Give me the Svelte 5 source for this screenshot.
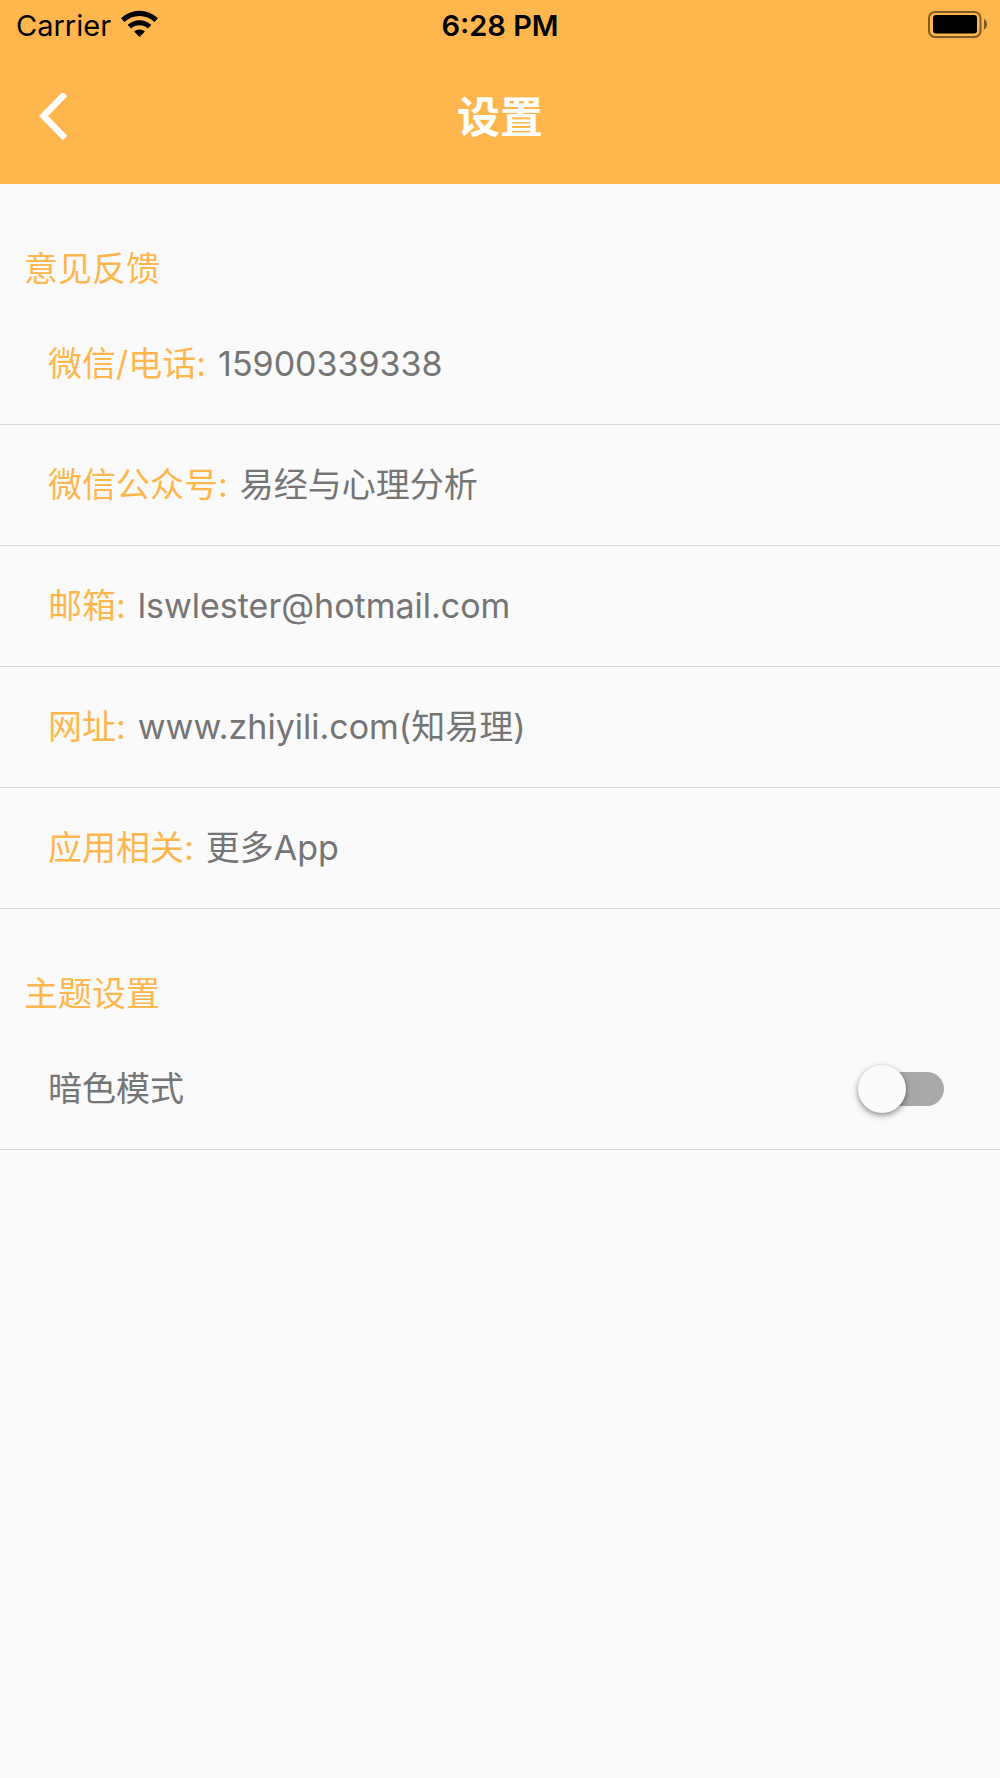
<script lang="ts">
  type Contact = { label: string; value: string; href?: string };

  const contacts: Contact[] = [
    { label: '微信/电话', value: '15900339338', href: 'tel:15900339338' },
    { label: '微信公众号', value: '易经与心理分析' },
    { label: '邮箱', value: 'lswlester@hotmail.com', href: 'mailto:lswlester@hotmail.com' },
    { label: '网址', value: 'www.zhiyili.com(知易理)', href: '#site' },
    { label: '应用相关', value: '更多App', href: '#apps' },
  ];

  let darkMode = $state(false);
</script>

<div class="page" class:dark={darkMode}>
  <header>
    <div class="status">
      <div class="carrier">
        <span>Carrier</span>
        <svg width="37" height="30" viewBox="0 0 37 30" aria-hidden="true">
          <path d="M0 8.3a26.6 26.6 0 0 1 37 0l-3.5 3.7a21.5 21.5 0 0 0-30 0z" />
          <path d="M6.6 15a17.2 17.2 0 0 1 23.8 0l-3.6 3.6a12 12 0 0 0-16.6 0z" />
          <path d="M13 21.6a8 8 0 0 1 11 0L18.5 27z" />
        </svg>
      </div>
      <time>6:28 PM</time>
      <svg class="battery" width="60" height="28" viewBox="0 0 60 28" aria-hidden="true">
        <rect x="1" y="1" width="51.5" height="25" rx="6" fill="none" stroke="#000" stroke-opacity=".5" stroke-width="2" />
        <rect x="5" y="4" width="44" height="18.500" rx="3" />
        <path d="M56 8c4 1.500 4 9 0 10.500z" fill-opacity=".5" />
      </svg>
    </div>
    <div class="bar">
      <button class="back" aria-label="返回">
        <svg width="30" height="48" viewBox="0 0 30 48" aria-hidden="true">
          <path d="M27 1L5.500 23 27 45" fill="none" stroke="#fff" stroke-width="6.400" />
        </svg>
      </button>
      <h1>设置</h1>
    </div>
  </header>

  <main>
    <section>
      <h2>意见反馈</h2>
      <ul>
        {#each contacts as { label, value, href }}
          <li>
            <span class="label">{label}:</span>
            {#if href}
              <a {href}>{value}</a>
            {:else}
              <span>{value}</span>
            {/if}
          </li>
        {/each}
      </ul>
    </section>

    <section>
      <h2>主题设置</h2>
      <ul>
        <li>
          <label for="dark-mode">暗色模式</label>
          <input id="dark-mode" class="switch" type="checkbox" role="switch" bind:checked={darkMode} />
        </li>
      </ul>
    </section>
  </main>
</div>

<style>
  :global(body) {
    background: #fafafa;
  }

  .page {
    min-height: 100vh;
    background: #fafafa;
    color: #757575;
    font-family: Inter, "Noto Sans CJK SC", sans-serif;
    font-size: 34px;
  }

  .page.dark {
    background: #303030;
    color: #ddd;
  }

  header {
    background: #ffb74d;
  }

  .status {
    display: grid;
    grid-template-columns: 1fr auto 1fr;
    align-items: center;
    height: 50px;
    padding: 0 12px;
    color: #000;
    font-size: 29px;
  }

  .carrier {
    display: flex;
    align-items: center;
    gap: 10px;
    padding-left: 4px;
  }

  .status time {
    font-weight: 600;
  }

  .battery {
    justify-self: end;
  }

  .bar {
    display: grid;
    grid-template-columns: 1fr auto 1fr;
    align-items: center;
    height: 134px;
    padding: 0 24px;
  }

  .back {
    display: flex;
    justify-self: start;
    padding: 12px 14px;
    border: 0;
    background: none;
    cursor: pointer;
  }

  h1 {
    margin: 0;
    color: #fff;
    font-size: 43px;
    font-weight: 600;
    line-height: 48px;
  }

  h2 {
    margin: 0;
    padding: 61px 24px 11px;
    color: #ffb74d;
    font-size: 34px;
    font-weight: 400;
    line-height: 48px;
  }

  ul {
    margin: 0;
    padding: 0;
    list-style: none;
  }

  li {
    display: flex;
    align-items: center;
    gap: 12px;
    padding: 36px 48px;
    border-bottom: 1px solid #d8d8d8;
    line-height: 48px;
  }

  li .label {
    color: #ffb74d;
  }

  li a {
    color: inherit;
    text-decoration: none;
  }

  .switch {
    appearance: none;
    position: relative;
    width: 94px;
    height: 48px;
    margin: 0 0 0 auto;
    cursor: pointer;
  }

  .switch::before {
    content: "";
    position: absolute;
    inset: 7px 8px;
    border-radius: 17px;
    background: #a9a9a9;
  }

  .switch::after {
    content: "";
    position: absolute;
    top: 0;
    left: 0;
    width: 48px;
    height: 48px;
    border-radius: 50%;
    background: #fafafa;
    box-shadow: 0 2px 5px rgba(0, 0, 0, 0.35), 0 3px 8px rgba(0, 0, 0, 0.15);
  }

  .switch:checked::before {
    background: #ffdba6;
  }

  .switch:checked::after {
    left: 46px;
    background: #ffb74d;
  }
</style>
